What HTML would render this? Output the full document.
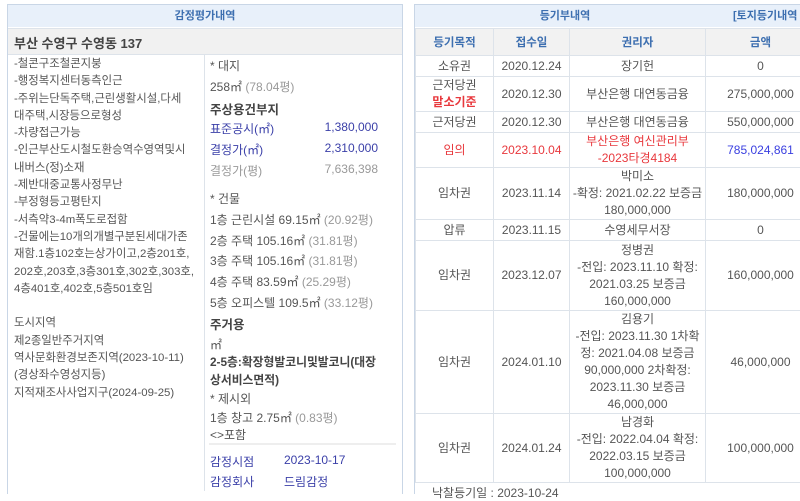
<!DOCTYPE html>
<html><head><meta charset="utf-8"><style>
*{margin:0;padding:0;box-sizing:border-box}
body{width:800px;height:491px;overflow:hidden;background:#fff;font-family:"Liberation Sans","Noto Sans CJK KR",sans-serif;color:#555;font-size:12px}
.abs{position:absolute;white-space:nowrap}
.hd{position:absolute;background:#e8f0fa;color:#3d6fb0;font-weight:bold;font-size:11px;text-align:center;line-height:22px}
.blue{color:#3a3fa8}
.gray{color:#999}
.b{font-weight:bold;color:#444;font-size:12.5px}
table{border-collapse:collapse;position:absolute;left:415px;top:28px;width:400px;table-layout:fixed}
td{border:1px solid #dde3ea;text-align:center;vertical-align:middle;font-size:12px;line-height:17px;color:#555}
th{background:#f2f2f2;color:#3d6fb0;font-size:11.5px;font-weight:bold;border:1px solid #dde3ea;height:27px}
.red{color:#e8383d}
</style></head><body>
<!-- left panel -->
<div class="abs" style="left:7px;top:4px;width:396px;height:490px;border:1px solid #c9d6e6;border-bottom:none"></div>
<div class="hd" style="left:8px;top:5px;width:394px;height:22px">감정평가내역</div>
<div class="abs" style="left:8px;top:28px;width:394px;height:27px;background:#f1f1f1;border-top:1px solid #dde3ea;border-bottom:1px solid #dde3ea"></div>
<div class="abs" style="left:14px;top:33px;font-size:13px;font-weight:bold;color:#444">부산 수영구 수영동 137</div>
<div class="abs" style="left:204px;top:55px;width:1px;height:436px;background:#dde3ea"></div>
<div class="abs" style="left:14px;top:56px;line-height:17.3px;font-size:11.4px">
-철콘구조철콘지붕<br>-행정복지센터동측인근<br>-주위는단독주택,근린생활시설,다세<br>대주택,시장등으로형성<br>-차량접근가능<br>-인근부산도시철도환승역수영역및시<br>내버스(정)소재<br>-제반대중교통사정무난<br>-부정형등고평탄지<br>-서측약3-4m폭도로접함<br>-건물에는10개의개별구분된세대가존<br>재함.1층102호는상가이고,2층201호,<br>202호,203호,3층301호,302호,303호,<br>4층401호,402호,5층501호임<br><br>도시지역<br>제2종일반주거지역<br>역사문화환경보존지역(2023-10-11)<br>(경상좌수영성지등)<br>지적재조사사업지구(2024-09-25)
</div>
<div class="abs" style="left:210px;top:57px">* 대지</div>
<div class="abs" style="left:210px;top:78px">258㎡ <span class="gray">(78.04평)</span></div>
<div class="abs b" style="left:210px;top:99px">주상용건부지</div>
<div class="abs blue" style="left:210px;top:120px">표준공시(㎡)</div><div class="abs blue" style="left:290px;top:120px;width:88px;text-align:right">1,380,000</div>
<div class="abs blue" style="left:210px;top:141px">결정가(㎡)</div><div class="abs blue" style="left:290px;top:141px;width:88px;text-align:right">2,310,000</div>
<div class="abs gray" style="left:210px;top:162px">결정가(평)</div><div class="abs gray" style="left:290px;top:162px;width:88px;text-align:right">7,636,398</div>
<div class="abs" style="left:210px;top:190px">* 건물</div>
<div class="abs" style="left:210px;top:211px">1층 근린시설 69.15㎡ <span class="gray">(20.92평)</span></div>
<div class="abs" style="left:210px;top:232px">2층 주택 105.16㎡ <span class="gray">(31.81평)</span></div>
<div class="abs" style="left:210px;top:252px">3층 주택 105.16㎡ <span class="gray">(31.81평)</span></div>
<div class="abs" style="left:210px;top:273px">4층 주택 83.59㎡ <span class="gray">(25.29평)</span></div>
<div class="abs" style="left:210px;top:294px">5층 오피스텔 109.5㎡ <span class="gray">(33.12평)</span></div>
<div class="abs b" style="left:210px;top:314px">주거용</div>
<div class="abs" style="left:210px;top:336px">㎡</div>
<div class="abs b" style="left:210px;top:353px;line-height:18px;font-size:11.8px">2-5층:확장형발코니및발코니(대장<br>상서비스면적)</div>
<div class="abs" style="left:210px;top:390px">* 제시외</div>
<div class="abs" style="left:210px;top:409px">1층 창고 2.75㎡ <span class="gray">(0.83평)</span></div>
<div class="abs" style="left:210px;top:426px">&lt;&gt;포함</div>
<div class="abs" style="left:209px;top:443px;width:187px;height:2px;background:#eee"></div>
<div class="abs blue" style="left:210px;top:453px">감정시점</div><div class="abs blue" style="left:284px;top:453px">2023-10-17</div>
<div class="abs blue" style="left:210px;top:473px">감정회사</div><div class="abs blue" style="left:284px;top:473px">드림감정</div>

<!-- right panel -->
<div class="abs" style="left:414px;top:4px;width:400px;height:490px;border-left:1px solid #c9d6e6;border-top:1px solid #c9d6e6"></div>
<div class="hd" style="left:415px;top:5px;width:385px;height:22px"><span style="position:absolute;left:0;width:300px;text-align:center">등기부내역</span><span style="position:absolute;left:318px">[토지등기내역</span></div>
<table>
<colgroup><col style="width:78px"><col style="width:76px"><col style="width:136px"><col style="width:110px"></colgroup>
<tr><th>등기목적</th><th>접수일</th><th>권리자</th><th>금액</th></tr>
<tr style="height:21px"><td>소유권</td><td>2020.12.24</td><td>장기헌</td><td>0</td></tr>
<tr style="height:35px"><td>근저당권<br><b class="red" style="font-size:12px">말소기준</b></td><td>2020.12.30</td><td>부산은행 대연동금융</td><td>275,000,000</td></tr>
<tr style="height:21px"><td>근저당권</td><td>2020.12.30</td><td>부산은행 대연동금융</td><td>550,000,000</td></tr>
<tr style="height:35px" class="red"><td class="red">임의</td><td class="red">2023.10.04</td><td class="red">부산은행 여신관리부<br>-2023타경4184</td><td style="color:#3a3fe0">785,024,861</td></tr>
<tr style="height:52px"><td>임차권</td><td>2023.11.14</td><td>박미소<br>-확정: 2021.02.22 보증금<br>180,000,000</td><td>180,000,000</td></tr>
<tr style="height:21px"><td>압류</td><td>2023.11.15</td><td>수영세무서장</td><td>0</td></tr>
<tr style="height:70px"><td>임차권</td><td>2023.12.07</td><td>정병권<br>-전입: 2023.11.10 확정:<br>2021.03.25 보증금<br>160,000,000</td><td>160,000,000</td></tr>
<tr style="height:102px"><td>임차권</td><td>2024.01.10</td><td>김용기<br>-전입: 2023.11.30 1차확<br>정: 2021.04.08 보증금<br>90,000,000 2차확정:<br>2023.11.30 보증금<br>46,000,000</td><td>46,000,000</td></tr>
<tr style="height:68px"><td>임차권</td><td>2024.01.24</td><td>남경화<br>-전입: 2022.04.04 확정:<br>2022.03.15 보증금<br>100,000,000</td><td>100,000,000</td></tr>
</table>
<div class="abs" style="left:432px;top:484px">낙찰등기일 : 2023-10-24</div>
</body></html>
